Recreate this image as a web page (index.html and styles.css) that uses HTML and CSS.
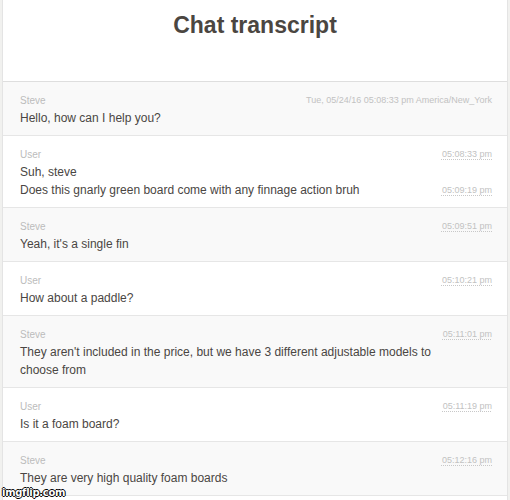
FILE: index.html
```html
<!DOCTYPE html>
<html>
<head>
    <title>Chat transcript</title>
    <link rel="stylesheet" href="styles.css">
</head>
<body>
    <div class="transcript">
        <div class="header">
            <h1>Chat transcript</h1>
        </div>
        <div class="group odd">
            <div class="meta">
                <span class="name">Steve</span>
                <span class="time">Tue, 05/24/16 05:08:33 pm America/New_York</span>
            </div>
            <div class="line"><span class="text">Hello, how can I help you?</span></div>
        </div>
        <div class="group">
            <div class="meta">
                <span class="name">User</span>
                <abbr class="time" title="Tue, 05/24/16 05:08:33 pm">05:08:33 pm</abbr>
            </div>
            <div class="line"><span class="text">Suh, steve</span></div>
            <div class="line">
                <span class="text">Does this gnarly green board come with any finnage action bruh</span>
                <abbr class="time" title="Tue, 05/24/16 05:09:19 pm">05:09:19 pm</abbr>
            </div>
        </div>
        <div class="group odd">
            <div class="meta">
                <span class="name">Steve</span>
                <abbr class="time" title="Tue, 05/24/16 05:09:51 pm">05:09:51 pm</abbr>
            </div>
            <div class="line"><span class="text">Yeah, it's a single fin</span></div>
        </div>
        <div class="group">
            <div class="meta">
                <span class="name">User</span>
                <abbr class="time" title="Tue, 05/24/16 05:10:21 pm">05:10:21 pm</abbr>
            </div>
            <div class="line"><span class="text">How about a paddle?</span></div>
        </div>
        <div class="group odd">
            <div class="meta">
                <span class="name">Steve</span>
                <abbr class="time" title="Tue, 05/24/16 05:11:01 pm">05:11:01 pm</abbr>
            </div>
            <div class="line"><span class="text">They aren't included in the price, but we have 3 different adjustable models to choose from</span></div>
        </div>
        <div class="group">
            <div class="meta">
                <span class="name">User</span>
                <abbr class="time" title="Tue, 05/24/16 05:11:19 pm">05:11:19 pm</abbr>
            </div>
            <div class="line"><span class="text">Is it a foam board?</span></div>
        </div>
        <div class="group odd">
            <div class="meta">
                <span class="name">Steve</span>
                <abbr class="time" title="Tue, 05/24/16 05:12:16 pm">05:12:16 pm</abbr>
            </div>
            <div class="line"><span class="text">They are very high quality foam boards</span></div>
        </div>
    </div>
    <div class="watermark">imgflip.com</div>
</body>
</html>
```

FILE: styles.css
```css
body {
    margin: 0;
    background-color: #f1f1ef;
    font-family: 'Liberation Sans', Arial, sans-serif;
    color: #4a4643;
}
.transcript {
    margin: 0 2px 0 2px;
    background-color: #fff;
    border-left: 1px solid #e4e4e4;
    border-right: 1px solid #e4e4e4;
    min-height: 500px;
}
.header {
    height: 81px;
    border-bottom: 1px solid #dedede;
    text-align: center;
}
h1 {
    margin: 0;
    padding-top: 12px;
    font-size: 23px;
    line-height: 27px;
    font-weight: 700;
    color: #4b4641;
}
.group {
    padding: 9px 15px 8px 17px;
    border-bottom: 1px solid #e6e6e6;
    background-color: #fff;
}
.group.odd {
    background-color: #f9f9f9;
}
.meta, .line {
    display: flex;
    justify-content: space-between;
    align-items: center;
    gap: 20px;
}
.meta {
    height: 18px;
}
.name {
    font-size: 10px;
    color: #bcbcbc;
}
.time {
    font-size: 9px;
    color: #c2c2c2;
    white-space: nowrap;
}
abbr.time {
    text-decoration: underline dotted #c8c8c8;
    text-underline-offset: 2px;
}
.line {
    font-size: 12px;
    line-height: 18px;
}
.text {
    max-width: 420px;
    color: #4a4643;
}
.watermark {
    position: absolute;
    left: 2px;
    top: 487px;
    font-family: 'DejaVu Sans', sans-serif;
    font-weight: 700;
    font-size: 10px;
    line-height: 12px;
    color: #fff;
    text-shadow: -1px 0 #000, 1px 0 #000, 0 -1px #000, 0 1px #000;
    letter-spacing: -0.3px;
}
```
